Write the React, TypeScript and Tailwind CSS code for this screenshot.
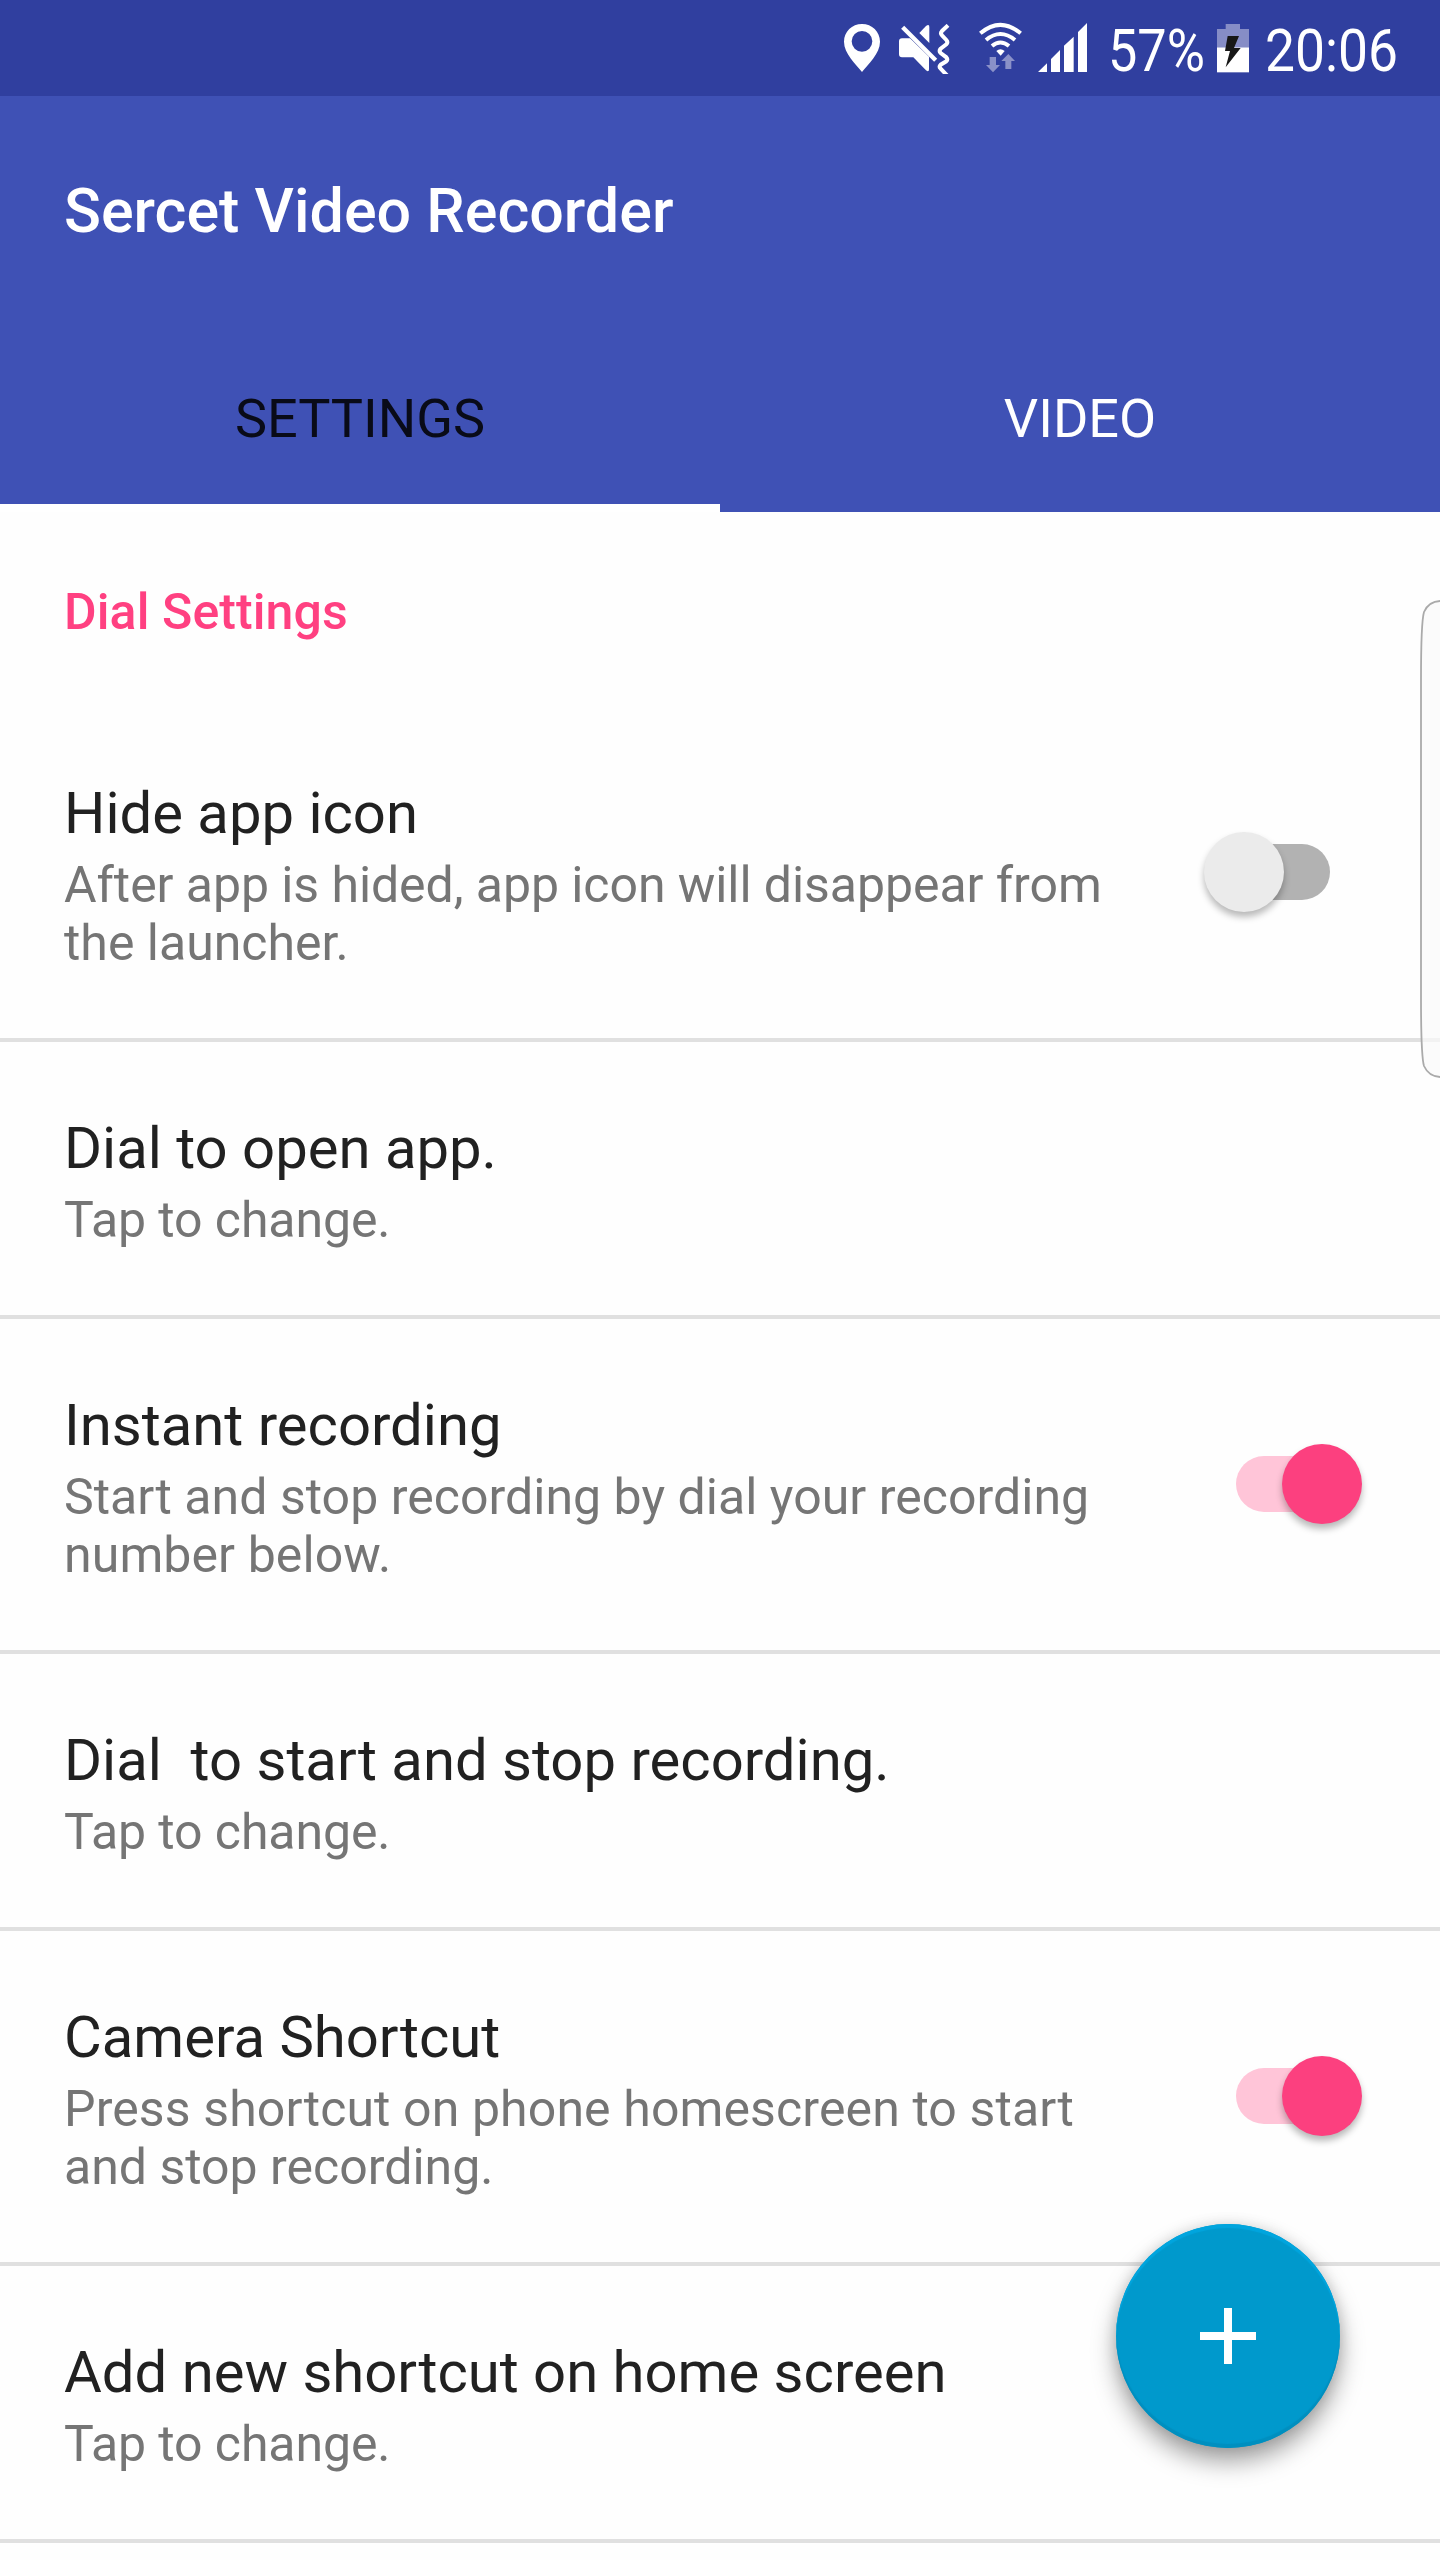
type Line = { text: string; tracking?: string };
type Item = { title: string; summary: Line[]; on?: boolean };

const tap: Line = { text: "Tap to change.", tracking: "tracking-[-0.1px]" };

const items: Item[] = [
  {
    title: "Hide app icon",
    summary: [{ text: "After app is hided, app icon will disappear from", tracking: "tracking-[-0.07px]" }, { text: "the launcher." }],
    on: false,
  },
  { title: "Dial to open app.", summary: [tap] },
  {
    title: "Instant recording",
    summary: [
      { text: "Start and stop recording by dial your recording", tracking: "tracking-[0.03px]" },
      { text: "number below.", tracking: "tracking-[0.1px]" },
    ],
    on: true,
  },
  { title: "Dial\u00a0 to start and stop recording.", summary: [tap] },
  {
    title: "Camera Shortcut",
    summary: [{ text: "Press shortcut on phone homescreen to start", tracking: "tracking-[0.11px]" }, { text: "and stop recording." }],
    on: true,
  },
  { title: "Add new shortcut on home screen", summary: [tap] },
];

function PinIcon() {
  return (
    <svg className="h-[50px] w-9" viewBox="72 72 108 150">
      <path
        fill="#fff"
        fillRule="evenodd"
        d="M126 72c30 0 54 23 54 53 0 36-36 68-54 91-18-23-54-55-54-91 0-30 24-53 54-53zm0 21a31 31 0 1 0 0 62 31 31 0 0 0 0-62z"
      />
    </svg>
  );
}

function MuteIcon() {
  return (
    <svg className="ml-[19px] h-[50px] w-[51px]" viewBox="237 72 153 150">
      <g fill="#fff">
        <path d="M246 115h24l57 55v38q0 10-9 3l-38-39h-34q-9 0-9-9v-39q0-9 9-9z" />
        <path d="M298 99l20-21q10-7 10 3v48z" />
      </g>
      <path d="M253 67L361 175" stroke="#303f9f" strokeWidth="8" />
      <path d="M248 82L347 181" stroke="#fff" strokeWidth="13" />
      <path
        d="M384 76L366 93q-6 7 0 13l13 14q6 7 0 13l-17 13q-6 7 0 13l17 13q6 7 0 12l-17 10q-6 6 0 12l19 20"
        fill="none"
        stroke="#fff"
        strokeWidth="12"
      />
    </svg>
  );
}

function WifiIcon() {
  return (
    <svg className="ml-[29px] h-[50px] w-[43px]" viewBox="477 72 129 150" overflow="visible">
      <g fill="none" stroke="#fff" strokeWidth="12">
        <path d="M481 100q60-51 121 0" />
        <path d="M498 120q43-36 87 0" />
        <path d="M516 138q25-21 51 0" />
      </g>
      <path fill="#fff" d="M529 153q12-10 25 0l-12 14z" />
      <g fill="#8a91c8">
        <path d="M509 171h19v24h12l-21 22-21-22h11z" />
        <path d="M565 162l20 21h-11v24h-18v-24h-12z" />
      </g>
    </svg>
  );
}

function SignalIcon() {
  return (
    <svg className="ml-4 h-[50px] w-[49px]" viewBox="654 72 147 150" overflow="visible">
      <path fill="#fff" d="M654 216l27-26v26zM693 177l27-27v66h-27zM732 137l29-27v106h-29zM774 96l27-27v147h-27z" />
    </svg>
  );
}

function BatteryIcon() {
  return (
    <svg className="ml-[15px] h-[50px] w-8" viewBox="321 72 96 150">
      <path fill="#868dc6" d="M347 72h43v15h27v55h-96V87h26z" />
      <path fill="#fff" d="M321 142h96v75h-96z" />
      <path fill="#171717" d="M353 108h34l-15 36h20l-45 58 13-49h-15z" />
    </svg>
  );
}

function StatusBar() {
  return (
    <div className="flex h-24 items-start bg-[#303f9f] pl-[844px] pt-6 text-white">
      <PinIcon />
      <MuteIcon />
      <WifiIcon />
      <SignalIcon />
      <span className="-mt-2 ml-[21px] w-[94px] origin-left scale-x-[0.87] whitespace-nowrap text-[60px] leading-[70px]">57%</span>
      <BatteryIcon />
      <span className="-mt-2 ml-[16px] origin-left scale-x-[0.89] whitespace-nowrap text-[60px] leading-[70px]">20:06</span>
    </div>
  );
}

function Toggle({ on }: { on: boolean }) {
  return (
    <div className={`relative mb-[7px] mr-[110px] h-14 w-[94px] shrink-0 rounded-full ${on ? "bg-[#ffc5d8]" : "bg-[#b2b2b2]"}`}>
      <span
        className={`absolute top-[-12.5px] size-[80.5px] rounded-full shadow-[0_5px_7px_rgba(0,0,0,0.28)] ${
          on ? "left-[45.5px] bg-[#fc407f]" : "left-[-32.5px] bg-[#ebebeb]"
        }`}
      />
    </div>
  );
}

function Row({ item }: { item: Item }) {
  return (
    <div className="flex items-center justify-between border-b-4 border-[#e0e0e0] pb-[66px] pl-16 pt-[72px]">
      <div className="whitespace-nowrap">
        <div className="text-[58px] leading-[68px] text-[#212121]">{item.title}</div>
        <div className="pt-[9px] text-[50px] leading-[58px] text-[#757575]">
          {item.summary.map((line) => (
            <div key={line.text} className={line.tracking}>
              {line.text}
            </div>
          ))}
        </div>
      </div>
      {item.on !== undefined && <Toggle on={item.on} />}
    </div>
  );
}

export default function App() {
  return (
    <div className="relative h-[2560px] w-[1440px] overflow-hidden bg-[#fefefe] font-['Roboto',sans-serif]">
      <StatusBar />
      <header className="flex h-[416px] flex-col bg-[#3f51b5]">
        <h1 className="pl-16 pt-20 text-[61px] font-medium leading-[70px] text-white">Sercet Video Recorder</h1>
        <nav className="mt-auto flex h-[188px] text-[54px] leading-[64px]">
          <div className="flex-1 border-b-8 border-white pt-[63px] text-center text-[#090b18]">SETTINGS</div>
          <div className="flex-1 pt-[63px] text-center text-white">VIDEO</div>
        </nav>
      </header>
      <main>
        <h2 className="h-[195px] pl-16 pt-[71px] text-[50px] font-medium leading-[58px] tracking-[0.1px] text-[#ff4081]">
          Dial Settings
        </h2>
        {items.map((item) => (
          <Row key={item.title} item={item} />
        ))}
      </main>

      {/* Edge panel handle */}
      <svg className="absolute right-0 top-[598px] h-[482px] w-5" viewBox="0 0 20 482">
        <path
          d="M21 3Q9 3 4 14Q1 24 1 82V400Q1 458 4 468Q9 479 21 479"
          fill="#fafafa"
          fillOpacity="0.7"
          stroke="#aaaaaa"
          strokeWidth="1.8"
        />
      </svg>

      <button
        aria-label="Add"
        className="absolute left-[1116px] top-[2224px] flex size-56 items-center justify-center rounded-full bg-[#0099cc] shadow-[inset_0_4px_1px_#00a5de,inset_0_-4px_1px_#008fbf,0_14px_24px_rgba(0,0,0,0.36),0_0_14px_rgba(0,0,0,0.12)]"
      >
        <svg className="size-14" viewBox="0 0 56 56">
          <path d="M24 0h8v24h24v8H32v24h-8V32H0v-8h24z" fill="#fff" />
        </svg>
      </button>
    </div>
  );
}
